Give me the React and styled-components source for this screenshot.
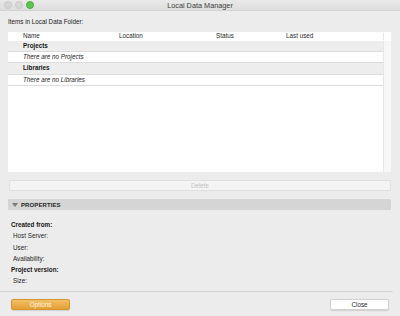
import React from "react";
import styled, { createGlobalStyle } from "styled-components";

const GlobalStyle = createGlobalStyle`
  html, body {
    margin: 0;
    padding: 0;
    background: #ececec;
  }
  body {
    font-family: "Liberation Sans", Arial, sans-serif;
    color: #1e1e1e;
  }
`;

const Window = styled.div`
  width: 400px;
  height: 316px;
  background: #ececec;
  display: flex;
  flex-direction: column;
  overflow: hidden;
  font-size: 6.3px;
`;

const TitleBar = styled.div`
  height: 11px;
  flex: none;
  position: relative;
  background: linear-gradient(#e9e9e9, #dedede);
  border-bottom: 1px solid #d2d2d2;
  box-sizing: border-box;
  display: flex;
  align-items: center;
  justify-content: center;
`;

const Lights = styled.div`
  position: absolute;
  left: 4px;
  top: 1px;
  display: flex;
  gap: 3px;
`;

const Light = styled.span`
  width: 8px;
  height: 8px;
  border-radius: 50%;
  box-sizing: border-box;
  background: ${(p) => (p.$on ? "#5ec452" : "#d6d6d6")};
  border: 0.5px solid ${(p) => (p.$on ? "#4aae3f" : "#cacaca")};
`;

const Title = styled.div`
  font-size: 7.3px;
  color: #3e3e3e;
  line-height: 11px;
`;

const Body = styled.div`
  padding: 0 9px 0 8px;
  display: flex;
  flex-direction: column;
`;

const Caption = styled.div`
  margin-top: 7px;
  height: 8px;
  line-height: 8px;
  color: #222;
`;

const Table = styled.div`
  margin-top: 6px;
  height: 140px;
  background: #fff;
  display: flex;
  flex-direction: column;
`;

const HeadRow = styled.div`
  height: 8.5px;
  display: flex;
  flex: none;
`;

const Cols = styled.div`
  flex: 1;
  display: grid;
  grid-template-columns: 96px 97px 70px 1fr;
  padding-left: 15px;
  line-height: 8px;
  color: #2a2a2a;
`;

const Corner = styled.div`
  width: 8px;
  border-left: 1px solid #e4e4e4;
  box-sizing: border-box;
  margin: 1px 0;
`;

const TableBody = styled.div`
  flex: 1;
  display: flex;
`;

const Rows = styled.div`
  flex: 1;
  display: flex;
  flex-direction: column;
`;

const Row = styled.div`
  height: 11.4px;
  box-sizing: border-box;
  border-bottom: 1px solid #dcdcdc;
  background: ${(p) => (p.$group ? "#ededed" : "#fff")};
  padding-left: 15px;
  line-height: 10.4px;
  font-weight: ${(p) => (p.$group ? 700 : 400)};
  font-style: ${(p) => (p.$group ? "normal" : "italic")};
  color: ${(p) => (p.$group ? "#161616" : "#222")};
`;

const Track = styled.div`
  width: 8px;
  background: #f7f7f7;
  border-left: 1px solid #e6e6e6;
  box-sizing: border-box;
`;

const DeleteButton = styled.div`
  margin: 8px 0 0 1px;
  height: 11px;
  box-sizing: border-box;
  background: #f4f4f4;
  border: 1px solid #dfdfdf;
  border-radius: 2px;
  color: #c2c2c2;
  text-align: center;
  line-height: 9px;
`;

const SectionHeader = styled.div`
  margin-top: 8px;
  height: 11px;
  background: #d5d5d5;
  border-radius: 1px;
  display: flex;
  align-items: center;
  padding-left: 4px;
  gap: 3px;
  font-weight: 700;
  color: #262626;
  font-size: 6px;
  letter-spacing: 0.1px;
`;

const Arrow = styled.span`
  width: 0;
  height: 0;
  border-left: 3px solid transparent;
  border-right: 3px solid transparent;
  border-top: 4px solid #7a7a7a;
`;

const Props = styled.div`
  margin-top: 9px;
  display: flex;
  flex-direction: column;
`;

const Prop = styled.div`
  height: 11.3px;
  line-height: 11.3px;
  padding-left: ${(p) => (p.$bold ? "3px" : "5px")};
  font-weight: ${(p) => (p.$bold ? 700 : 400)};
  color: ${(p) => (p.$bold ? "#161616" : "#262626")};
`;

const Footer = styled.div`
  margin-top: auto;
  height: 25px;
  margin-right: 7px;
  box-sizing: border-box;
  border-top: 1px solid #d6d6d6;
  display: flex;
  justify-content: space-between;
  padding: 7px 4px 0 11px;
`;

const Button = styled.div`
  width: 59px;
  height: 11px;
  box-sizing: border-box;
  border-radius: 2px;
  text-align: center;
  line-height: 10px;
  background: ${(p) =>
    p.$primary ? "linear-gradient(#f4c068, #e39f33)" : "#fff"};
  border: 1px solid ${(p) => (p.$primary ? "#d69530" : "#d2d2d2")};
  color: ${(p) => (p.$primary ? "#fff6e3" : "#1e1e1e")};
  box-shadow: 0 0.5px 1px rgba(0, 0, 0, 0.12);
`;

export default function App() {
  return (
    <Window>
      <GlobalStyle />
      <TitleBar>
        <Lights>
          <Light />
          <Light />
          <Light $on />
        </Lights>
        <Title>Local Data Manager</Title>
      </TitleBar>
      <Body>
        <Caption>Items in Local Data Folder:</Caption>
        <Table>
          <HeadRow>
            <Cols>
              <span>Name</span>
              <span>Location</span>
              <span>Status</span>
              <span>Last used</span>
            </Cols>
            <Corner />
          </HeadRow>
          <TableBody>
            <Rows>
              <Row $group>Projects</Row>
              <Row>There are no Projects</Row>
              <Row $group>Libraries</Row>
              <Row>There are no Libraries</Row>
            </Rows>
            <Track />
          </TableBody>
        </Table>
        <DeleteButton>Delete</DeleteButton>
        <SectionHeader>
          <Arrow />
          PROPERTIES
        </SectionHeader>
        <Props>
          <Prop $bold>Created from:</Prop>
          <Prop>Host Server:</Prop>
          <Prop>User:</Prop>
          <Prop>Availability:</Prop>
          <Prop $bold>Project version:</Prop>
          <Prop>Size:</Prop>
        </Props>
      </Body>
      <Footer>
        <Button $primary>Options</Button>
        <Button>Close</Button>
      </Footer>
    </Window>
  );
}
